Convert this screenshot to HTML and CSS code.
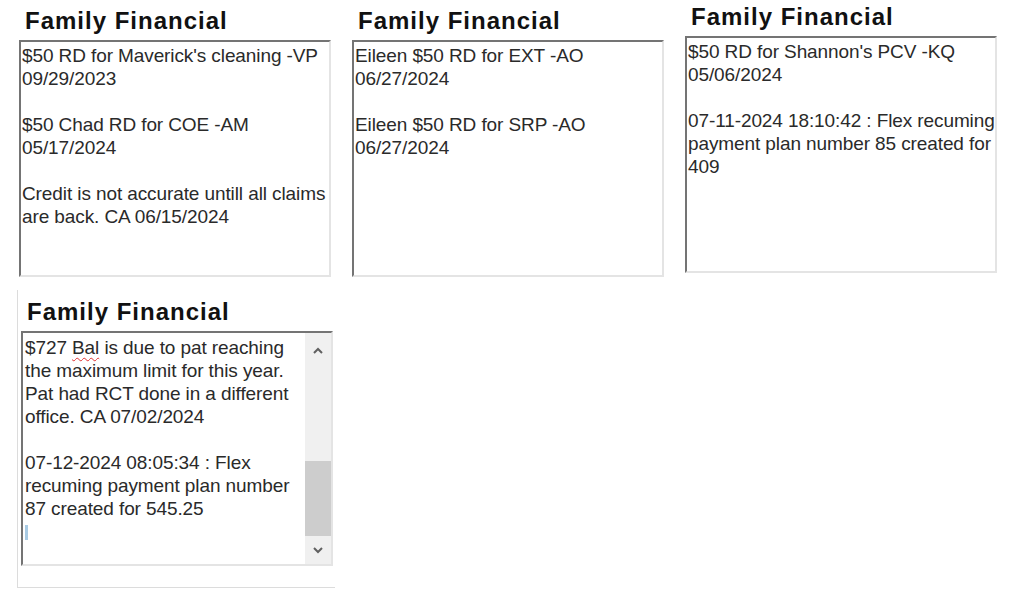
FILE: index.html
```html
<!DOCTYPE html>
<html lang="en">
<head>
    <meta charset="UTF-8">
    <meta name="viewport" content="width=device-width, initial-scale=1.0">
    <title>Family Financial Notes</title>
    <link rel="stylesheet" href="styles.css">
</head>
<body>
    <div class="row">
        <div class="panel">
            <h2 class="panel-title">Family Financial</h2>
            <div class="note-box">
                <div class="note-text">
                    <p>$50 RD for Maverick's cleaning -VP<br>09/29/2023</p>
                    <p>$50 Chad RD for COE -AM<br>05/17/2024</p>
                    <p>Credit is not accurate untill all claims<br>are back. CA 06/15/2024</p>
                </div>
            </div>
        </div>

        <div class="panel">
            <h2 class="panel-title">Family Financial</h2>
            <div class="note-box">
                <div class="note-text">
                    <p>Eileen $50 RD for EXT -AO<br>06/27/2024</p>
                    <p>Eileen $50 RD for SRP -AO<br>06/27/2024</p>
                </div>
            </div>
        </div>

        <div class="panel panel-high">
            <h2 class="panel-title">Family Financial</h2>
            <div class="note-box">
                <div class="note-text">
                    <p>$50 RD for Shannon's PCV -KQ<br>05/06/2024</p>
                    <p>07-11-2024 18:10:42 : Flex recuming<br>payment plan number 85 created for<br>409</p>
                </div>
            </div>
        </div>
    </div>

    <div class="frame">
        <h2 class="panel-title">Family Financial</h2>
        <div class="note-box scrolling">
            <div class="note-text scrolled">
                <p>$727 <span class="misspelled">Bal</span> is due to pat reaching<br>the maximum limit for this year.<br>Pat had RCT done in a different<br>office. CA 07/02/2024</p>
                <p>07-12-2024 08:05:34 : Flex<br>recuming payment plan number<br>87 created for 545.25<br><span class="caret"></span></p>
            </div>
            <div class="scrollbar">
                <svg class="arrow arrow-up" width="12" height="8" viewBox="0 0 12 8"><path d="M2 6 L6 2 L10 6" fill="none" stroke="#606060" stroke-width="2"/></svg>
                <div class="track">
                    <div class="thumb"></div>
                </div>
                <svg class="arrow" width="12" height="8" viewBox="0 0 12 8"><path d="M2 2 L6 6 L10 2" fill="none" stroke="#606060" stroke-width="2"/></svg>
            </div>
        </div>
    </div>
</body>
</html>
```

FILE: styles.css
```css
body {
    margin: 0;
    background: #ffffff;
    font-family: "Liberation Sans", Arial, sans-serif;
    color: #1e1e1e;
}
.row {
    display: flex;
    gap: 21px;
    padding-left: 19px;
    height: 290px;
}
.panel {
    width: 312px;
    padding-top: 8px;
}
.panel-high {
    padding-top: 4px;
}
.panel-title {
    margin: 0 0 6px 6px;
    font-size: 24px;
    line-height: 26px;
    font-weight: bold;
    letter-spacing: 1px;
    color: #111111;
}
.note-box {
    height: 233px;
    border-top: 2px solid #747474;
    border-left: 2px solid #747474;
    border-right: 2px solid #e4e4e4;
    border-bottom: 2px solid #e4e4e4;
    background: #ffffff;
    overflow: hidden;
}
.note-text {
    padding: 2px 0 0 1px;
    font-size: 19px;
    line-height: 23px;
    letter-spacing: -0.1px;
    white-space: nowrap;
    color: #2a2a2a;
}
.note-text p {
    margin: 0 0 23px 0;
}
.frame {
    margin-left: 17px;
    width: 318px;
    border-left: 1px solid #dcdcdc;
    border-bottom: 1px solid #dcdcdc;
    padding: 9px 0 21px 3px;
    box-sizing: border-box;
}
.scrolling {
    display: flex;
    width: 312px;
    box-sizing: border-box;
    height: 235px;
}
.scrolled {
    flex: 1;
    margin-top: 1px;
    padding-left: 2px;
}
.misspelled {
    text-decoration: underline wavy #e03030;
    text-decoration-thickness: 1px;
    text-underline-offset: 3px;
}
.caret {
    display: inline-block;
    width: 3px;
    height: 15px;
    background: #a9cbe4;
    vertical-align: -2px;
}
.scrollbar {
    width: 26px;
    background: #f0f0f0;
    display: flex;
    flex-direction: column;
    align-items: center;
}
.arrow {
    margin: 10px 0;
}
.arrow-up {
    margin-top: 14px;
    margin-bottom: 6px;
}
.track {
    flex: 1;
    width: 100%;
    display: flex;
    flex-direction: column;
    justify-content: flex-end;
}
.thumb {
    height: 75px;
    background: #cdcdcd;
}
```
